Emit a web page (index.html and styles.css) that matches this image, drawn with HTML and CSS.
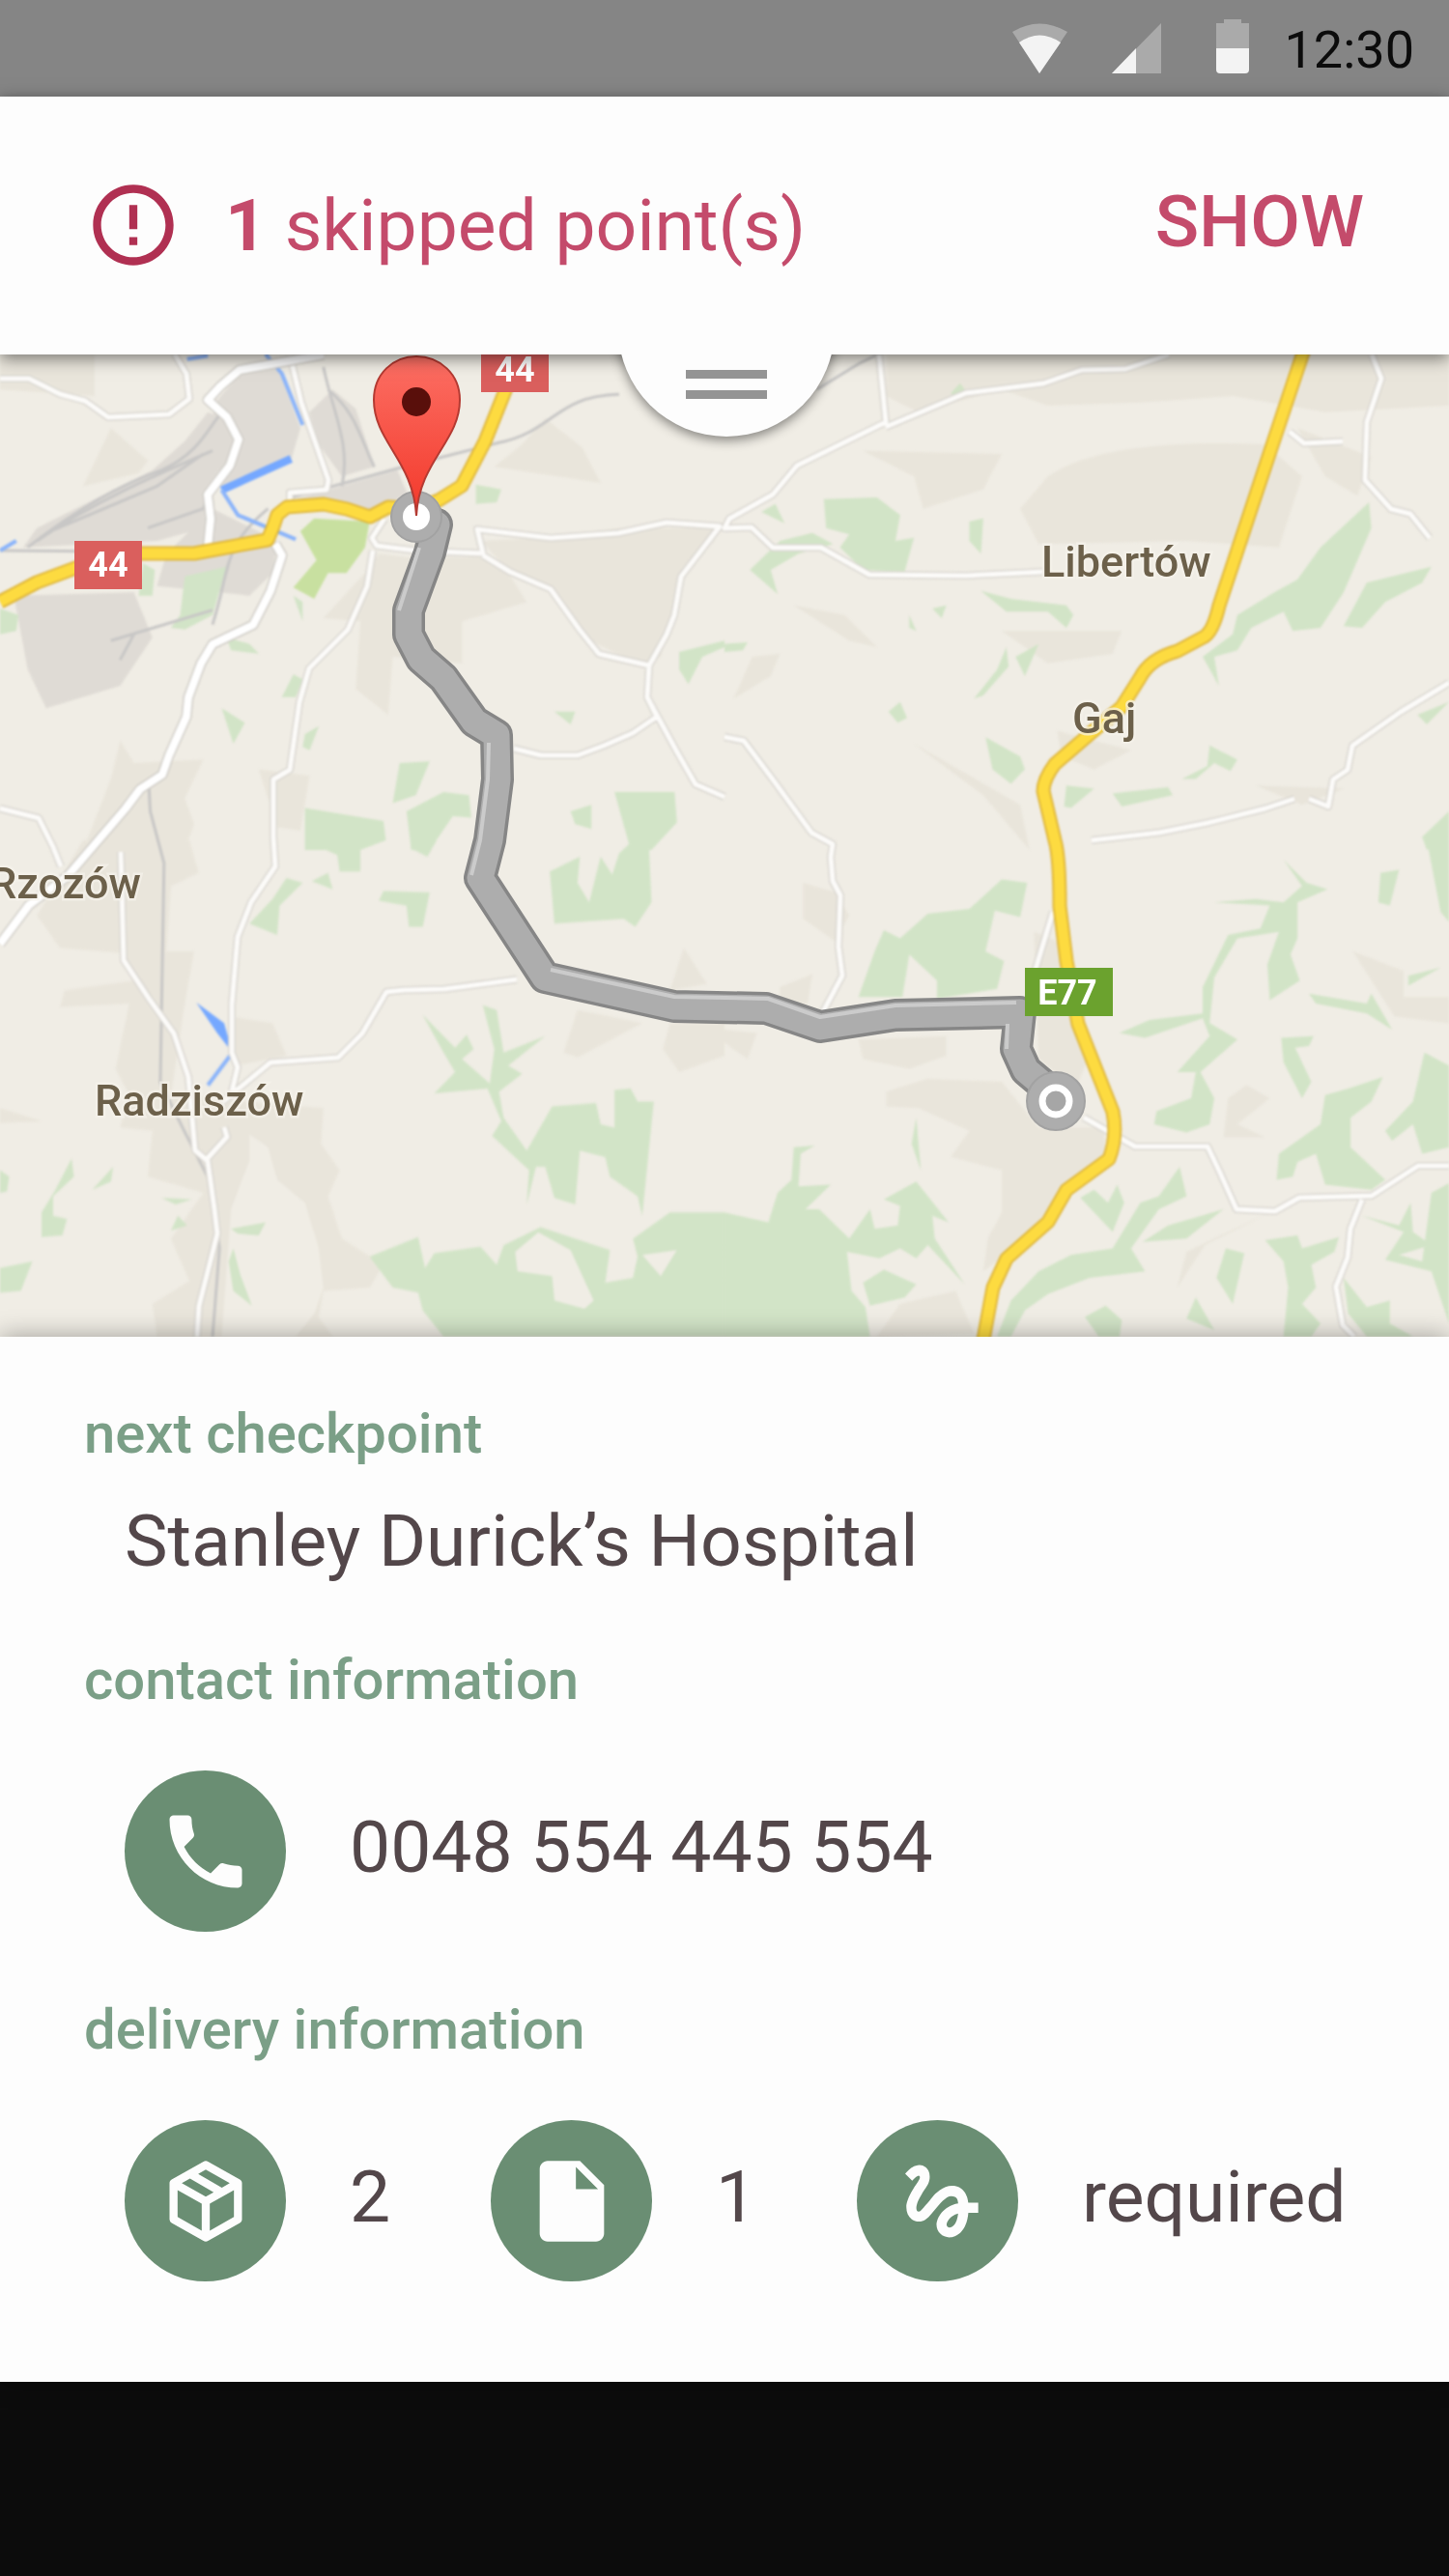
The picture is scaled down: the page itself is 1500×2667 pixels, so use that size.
FILE: index.html
```html
<!DOCTYPE html>
<html lang="en">
<head>
<meta charset="utf-8">
<meta name="viewport" content="width=device-width, initial-scale=1">
<title>Next checkpoint</title>
<link rel="stylesheet" href="styles.css">
</head>
<body>
<div class="screen">
  <div class="status-bar">
    <svg class="status-icons" viewBox="0 0 246 56" aria-hidden="true">
      <path class="dim" d="M28 56L0 13Q28-4 57 13Z"/>
      <path class="lit" d="M28 56L7 24Q28 9 50 24Z"/>
      <path class="dim" d="M103 56L154 4V56Z"/>
      <path class="lit" d="M103 56L128 30V56Z"/>
      <path class="dim" d="M211 30V4H219V0H237V4H245V30Z"/>
      <path class="lit" d="M211 30H245V52Q245 56 241 56H215Q211 56 211 52Z"/>
    </svg>
    <time class="clock">12:30</time>
  </div>

  <header class="alert">
    <svg class="alert-icon" viewBox="0 0 24 24" aria-hidden="true"><path d="M11 15h2v2h-2zm0-8h2v6h-2zm.99-5C6.47 2 2 6.48 2 12s4.47 10 9.99 10C17.52 22 22 17.52 22 12S17.52 2 11.99 2zM12 20c-4.42 0-8-3.58-8-8s3.58-8 8-8 8 3.58 8 8-3.58 8-8 8z"/></svg>
    <p class="alert-text"><strong>1</strong> skipped point(s)</p>
    <button class="alert-action" type="button">SHOW</button>
    <div class="handle-clip">
      <button class="handle" type="button" aria-label="Expand"><span class="handle-bar"></span><span class="handle-bar"></span></button>
    </div>
  </header>

  <main>
  <svg class="map" viewBox="0 0 1500 1017" role="img" aria-label="Route map">
    <g class="land">
      <!-- north-west -->
      <g transform="translate(0 -7) scale(.4783 .3333)">
        <path class="field" d="M0 20H205V150L0 130ZM240 250L320 350 300 390 180 430ZM1180 220L1260 310 1300 420 1070 370 1130 300ZM1040 600L1180 590 1340 560 1550 560 1480 680 1430 960 1390 985 1260 900 1200 760 1100 690ZM820 640L880 650 1040 650 1100 700 1140 790 1000 850 1000 980 850 960 840 1140 770 1060 780 850 700 840 790 700ZM560 1310L670 1330 650 1500 600 1490ZM260 1220L290 1290 440 1280 400 1400 420 1480 400 1560H180L240 1340Z"/>
        <path class="urban" d="M520 80L600 50 650 250 630 350 480 440 460 180ZM720 130L770 190 810 370 740 400 690 300 670 200ZM450 200L500 230 520 290 450 430 440 560 340 600 50 620 80 560 330 380 400 290ZM460 500L600 600 590 700 540 770 340 740 360 640ZM30 770L290 760 330 900 260 1050 100 1120 60 1000ZM640 470L860 380 890 480 800 510Z"/>
        <path class="wood" d="M310 670L335 690 330 770 300 770ZM400 710L490 680 460 830 400 875 370 870 390 830ZM0 810L40 830 35 880 0 890ZM490 900L540 920 560 950 500 940ZM1030 425L1085 440 1075 480 1030 485ZM1470 945L1568 910V930L1520 960 1490 1045 1470 1000ZM635 1015L655 1030 640 1085 610 1085ZM480 1120L530 1165 505 1230ZM690 1175L670 1250 655 1240 660 1200ZM1200 1130L1245 1130 1235 1170ZM865 1290L930 1285 900 1390 850 1415ZM660 1430L830 1470 835 1530 780 1560H660ZM880 1440L960 1380 1015 1390 1020 1460 980 1455 930 1560H890ZM1235 1440L1280 1420 1280 1495 1245 1480ZM1330 1380H1460L1465 1475 1410 1560H1365ZM635 770L655 790 655 850Z"/>
        <path class="park" d="M680 530L800 540 790 620 750 700 710 700 680 780 635 745 685 660 650 570Z"/>
        <path class="rail" d="M60 620C150 520 250 430 350 380C430 330 450 250 480 200M80 600C200 480 330 400 460 320M110 570L340 430 440 330M320 560L440 500 460 430M0 630L200 632M620 470L860 375 1080 295C1200 260 1200 150 1340 145M700 60C720 200 760 300 740 430M710 130C770 200 780 280 810 370M240 910L460 815M580 500C480 620 500 680 460 860M260 970L290 890"/>
        <path class="river" d="M630 345L480 442"/>
        <path class="stream" d="M575 20L610 80 655 240M480 442L515 520 640 595M0 630L35 600M405 35L450 25"/>
      </g>
      <!-- north-east -->
      <g transform="translate(750 -7) scale(.4783 .3333)">
        <path class="field" d="M350 20H1568V180L1300 200 1100 150 900 170 700 180 600 130 420 200 350 150ZM300 320L600 330 560 440 430 500 410 400ZM700 400C800 300 1000 290 1170 300L1250 400 1200 620 1000 600 680 610 640 500ZM1240 250L1400 340 1370 460 1300 400ZM150 800L260 830 330 930 270 910ZM600 880L860 880 840 950 700 980ZM410 1230L640 1420 660 1560 560 1390ZM60 960L120 950 100 1020 20 1090ZM720 1190L880 1250 800 1310 730 1270ZM1150 1360L1340 1370 1250 1420Z"/>
        <path class="wood" d="M215 470L330 465 380 520 370 600 410 590 390 695 300 690 250 620 270 580 220 560ZM80 510L110 485 130 545ZM120 600L190 575 235 610 160 640 100 690 115 765 55 690ZM530 540L560 530 555 640 530 600ZM555 755L620 780 740 800 755 830 740 870 700 820 610 820ZM0 920L50 915 40 940 0 945ZM450 810L480 800 470 840ZM400 830L415 880 400 870ZM610 930L615 990 560 1080 540 1090 590 1000ZM355 1130L380 1100 395 1150 375 1165ZM565 1210L640 1270 650 1310 620 1355 580 1310ZM1395 480L1400 560 1340 760 1290 870 1230 880 1210 820 1140 870 1110 940 1060 960 1070 1050 1035 960 1100 890 1110 830 1190 760 1240 720 1290 620ZM1530 680L1510 730 1430 790 1380 870 1340 865 1390 730ZM990 1340L1045 1300 1050 1235 1110 1280 1095 1315 1060 1290 1020 1340ZM840 1385L960 1365 970 1390 860 1425ZM740 1360L800 1370 750 1430 735 1425ZM510 110L525 140 500 165 490 140ZM1568 1440V1530L1520 1560 1510 1520ZM1500 1140L1568 1100 1520 1170ZM630 960L680 920 650 1020Z"/>
        <path class="rail" d="M200 130L290 50 340 15"/>
      </g>
      <!-- south-west -->
      <g transform="translate(0 503) scale(.4783 .338)">
        <path class="field" d="M180 0H410L430 100 370 140 360 340H420L400 500 370 780 700 820 695 930 735 1010 710 1090 740 1220 830 1300 800 1370 700 1380 690 1460 720 1520H340L330 1420 410 1350 370 1220 440 1080 320 1030 330 890 260 880 280 780 250 700 280 500 130 510 140 460 290 430 270 345 130 330 80 230ZM500 540L590 560 620 660 510 690ZM1480 330L1530 440 1450 460ZM1250 520L1390 560 1250 665 1220 650ZM1450 560H1568V660L1470 710 1435 640ZM0 820L90 860 0 865Z"/>
        <path class="land-fill" d="M540 900L580 940 600 1040 660 1110 690 1250 700 1370 680 1450 640 1520H480L500 1130 540 980Z"/>
        <path class="wood" d="M660 0H780L780 95 735 95 730 45ZM890 0H945L925 50 890 25ZM620 115L655 130 605 200 600 290 540 255 590 180ZM675 125L710 100 720 150ZM830 155L930 160 915 265H885L880 200 820 185ZM1190 95L1255 50 1250 130 1275 190 1300 50 1325 105 1340 40 1370 0H1420L1405 30 1410 190 1375 265 1350 240 1200 255ZM915 535L985 635 1010 595 1025 640 1000 670 1060 745 1070 640 1045 505 1075 520 1090 650 1180 600 1100 690 1130 715 1080 770 1090 850 1140 950 1195 815 1290 805 1300 870 1330 880 1330 765 1365 760 1380 800 1415 800 1390 1150 1380 1090 1320 1030 1310 970 1255 950 1245 1115 1200 1095 1180 1000 1160 1000 1140 1115 1145 1010 1065 905 1085 860 1055 760 940 775 985 710 960 650ZM1568 1140H1450L1370 1220 1380 1275 1370 1340 1310 1355 1320 1255 1170 1185 1090 1240 1075 1300 1040 1245 940 1265 920 1310 905 1215 800 1275 850 1370 905 1385 915 1440 960 1520H1568Z"/>
        <path class="land-fill" d="M1165 1200L1235 1255 1285 1410 1265 1435 1200 1410 1195 1335 1120 1320 1115 1260ZM1390 1270L1465 1255 1430 1335Z"/>
        <path class="wood" d="M155 975L160 1030 115 1090 115 1150 145 1160 135 1210 90 1215 90 1140 120 1070ZM245 1000L240 1045 200 1070ZM350 1095L415 1100 380 1115ZM385 1150L405 1180 370 1195ZM500 1190L575 1170 560 1210 515 1205ZM505 1250L520 1330 545 1425 505 1380 495 1290ZM0 1310L70 1290 45 1380 0 1385ZM0 1010L20 1030 15 1075 0 1080Z"/>
        <path class="rail" d="M322 -180L325 -90 355 70 347 740 395 880 460 1060 475 1250 460 1520"/>
        <path class="water" d="M425 497L485 560 503 650 470 590Z"/>
        <path class="stream" d="M503 650L450 750"/>
      </g>
      <!-- south-east -->
      <g transform="translate(750 503) scale(.4783 .338)">
        <path class="field" d="M170 130L240 160 270 230 240 310 170 240ZM120 450L190 410 180 500 120 500ZM290 610L480 600 480 660 400 700 300 670ZM350 770L440 730 600 740 680 880 820 880 830 1000 740 1060 640 1240 560 1320 570 1220 600 1140 600 1010 490 970 530 890 420 820 350 815ZM1360 340L1470 400 1470 480 1568 480V560L1450 540ZM1130 750L1180 790 1110 870 1170 910 1080 910 1090 790ZM0 580L70 590 50 670 0 620ZM670 280L740 320 790 660 760 760 680 670ZM380 1420L500 1380 540 1510 330 1520ZM980 1370L1000 1260 1180 1140 1040 1240Z"/>
        <path class="wood" d="M290 480L325 340 345 275 380 300 440 225 530 210 600 120 655 130 640 235 585 215 565 340 605 370 590 455 460 485 460 430 400 350 385 480ZM1210 60L1260 130 1305 150 1240 190 1240 300 1225 350 1245 430 1180 490 1175 380 1200 280 1110 300 1060 420 1050 560 1110 610 1030 710 1060 790 1050 870 1000 895 930 870 935 830 1010 790 1020 710 980 710 1050 600 1035 545 910 605 855 590 920 550 1035 530 1035 450 1090 290 1160 270 1180 200 1060 190 1150 180 1210 190 1250 140ZM1420 100L1460 90 1440 200 1415 190ZM1520 0H1568V250L1550 220ZM1550 390L1480 445 1480 415ZM1265 470L1390 500 1400 470 1445 580 1390 530 1280 500ZM1205 605L1275 600 1265 630 1235 635 1270 740 1250 790 1210 680ZM1425 725L1400 800 1355 850 1355 940 1430 1040 1400 1070 1300 1055 1280 960 1240 985 1230 1030 1195 1040 1200 960 1290 870 1300 780 1350 760ZM1515 650L1568 690V940L1510 960 1490 870 1445 920 1430 890 1490 800ZM0 1140L95 1170 115 1080 145 1040 150 940 195 935 165 960 160 1060 230 1055 175 1130 205 1130 270 1220 315 1130 325 1190 375 1180 380 1120 345 1100 415 1045 485 1170 450 1150 455 1220 520 1360 440 1240 415 1280 380 1250 335 1280 265 1260 275 1380 305 1430 315 1520H0ZM300 1355L345 1315 415 1360 390 1400 315 1425ZM415 850L425 1010 405 930ZM770 1095L800 1070 830 1110 850 1055 865 1110 840 1200ZM985 1000L1000 1090 940 1130 880 1250 910 1320 790 1340 700 1390 650 1440 620 1520H590L620 1410 680 1320 750 1270 840 1250 900 1110 940 1090ZM1080 1130L1000 1220 905 1230 960 1180ZM1170 1225L1240 1210 1250 1250 1330 1215 1320 1260 1270 1300 1280 1370 1250 1420 1290 1480 1270 1520H1210L1220 1370 1210 1290ZM1085 1250L1125 1265 1100 1420 1065 1340ZM1020 1400L1060 1500 1000 1465ZM780 1460L825 1425 860 1470 855 1520H810ZM1340 1340L1390 1430 1440 1410 1440 1480 1490 1520H1390L1350 1450ZM1380 1150L1460 1180 1485 1110 1490 1200 1530 1240 1460 1270 1510 1290 1530 1080 1568 1050V1480L1530 1320 1430 1285 1470 1200Z"/>
      </g>

      <g class="minor-casing">
        <path id="lanes" d="M0 25L30 25 62 41 88 48 112 65 175 62 196 46 193 20 181 0M300 0L312 50 340 130 338 140 300 143 300 155M398 170L385 190 390 198 430 203 500 206 494 181 570 190 640 185 690 174 745 178 705 230 698 270 690 290 672 322 670 355 700 410 720 445 750 458M500 208L528 225 570 243 600 285 620 310 672 322M670 355L680 375 655 392 625 405 598 415 560 415 532 408M386 203L380 240 360 285 320 325 310 360 300 430 283 440 283 500 285 530 260 567 246 603 240 673 240 723 246 738 240 763M0 470L40 480 55 510 63 530M125 515L128 627 155 668 180 703 195 748 202 824 215 835 222 885 225 910 206 985 204 1017M230 774L280 733 350 728 375 703 400 660 418 658 460 657 535 647M232 800L235 810 215 832M910 0L917 70 825 115 800 145 755 170 750 180 778 179 800 200 850 200 900 228 1000 229 1080 225M917 75L1000 40 1080 30 1120 16 1165 15 1210 0M1420 0L1430 25 1415 70 1413 130 1440 160 1460 165 1480 190M1335 80L1350 92 1390 90M750 396L770 400 800 440 840 495 862 507 860 520 862 545 870 560 868 613 872 643 848 688M1130 503L1200 495 1250 485 1310 470 1340 460M1355 460L1375 468 1380 440 1395 430 1400 405 1450 370 1500 340M1122 790L1175 820 1250 820 1262 845 1280 885 1320 887 1345 873 1420 871 1468 840 1500 840M1410 875L1398 905 1395 935 1383 965 1390 1005 1402 1017M1090 577L1070 643"/>
      </g>
      <use href="#lanes" class="minor"/>
      <g class="major-casing">
        <path id="streets" d="M335 0L248 16 228 33 215 47 235 65 247 88 238 115 215 145 218 170 215 200M285 196L292 208 280 245 262 280 220 300 208 320 195 355 193 375 175 415 168 435 145 450 130 470 100 505 70 540 30 570 0 610"/>
      </g>
      <use href="#streets" class="major"/>
      <path id="highways" class="highway-casing" d="M0 256L38 236 81 220 143 206 201 206 277 192 283 178 287 166 297 158 335 155 359 160 383 168 402 158 431 160 454 151 478 136 502 90 530 20M1350-5L1314 103 1262 260Q1256 286 1247 292L1219 307Q1190 315 1180 335L1161 365 1128 393 1092 424Q1080 440 1080 452L1092 503Q1097 520 1097 571L1104 628 1116 693 1133 736 1152 784Q1157 810 1148 833L1104 865 1085 898 1042 936 1028 966 1018 1020"/>
      <path class="highway" d="M0 256L38 236 81 220 143 206 201 206 277 192 283 178 287 166 297 158 335 155 359 160 383 168 402 158 431 160 454 151 478 136 502 90 530 20M1350-5L1314 103 1262 260Q1256 286 1247 292L1219 307Q1190 315 1180 335L1161 365 1128 393 1092 424Q1080 440 1080 452L1092 503Q1097 520 1097 571L1104 628 1116 693 1133 736 1152 784Q1157 810 1148 833L1104 865 1085 898 1042 936 1028 966 1018 1020"/>
    </g>

    <g class="route">
      <path class="route-edge" d="M431 168L452 176 445 205 423 265 423 290 436 315 459 335 491 380 514 394 515 440 507 503 497 542 564 645 698 675 793 677 849 696 927 684 1056 681 1052 719 1062 741 1093 767"/>
      <path class="route-core" d="M431 168L452 176 445 205 423 265 423 290 436 315 459 335 491 380 514 394 515 440 507 503 497 542 564 645 698 675 793 677 849 696 927 684 1056 681 1052 719 1062 741 1093 767"/>
      <path class="route-shine" d="M434 200L413 265M506 402L505 440 497 503 488 539M570 637L698 665 795 667 849 686 927 674 1052 671M1043 693L1042 719"/>
      <circle class="stop" cx="431" cy="168" r="26"/>
      <circle class="stop-dot" cx="431" cy="168" r="14"/>
      <circle class="stop" cx="1093" cy="773" r="30"/>
      <circle class="stop-ring" cx="1093" cy="773" r="14"/>
    </g>

    <defs>
      <linearGradient id="pin-fill" x1="0" y1="0" x2="0" y2="1"><stop offset="0" stop-color="#fc6f64"/><stop offset="1" stop-color="#f3382a"/></linearGradient>
    </defs>
    <path class="pin" d="M431 167C428 110 387 90 387 47C387 20 407 2 431 2S476 20 476 47C476 90 434 110 431 167Z"/>
    <circle class="pin-hole" cx="431" cy="49" r="15"/>

    <g class="shield">
      <rect class="red" x="77" y="193" width="70" height="50"/>
      <rect class="red" x="498" y="-11" width="70" height="50"/>
      <rect class="green" x="1061" y="635" width="91" height="50"/>
      <text x="112" y="230">44</text>
      <text x="533" y="28">44</text>
      <text x="1105" y="673">E77</text>
    </g>
    <g class="town">
      <text x="1078" y="230">Libertów</text>
      <text x="1110" y="392">Gaj</text>
      <text x="146" y="563" text-anchor="end">Rzozów</text>
      <text x="98" y="788">Radziszów</text>
    </g>
  </svg>

  <section class="sheet">
    <h2 class="label">next checkpoint</h2>
    <p class="place">Stanley Durick’s Hospital</p>

    <h2 class="label">contact information</h2>
    <div class="row">
      <div class="item">
        <button class="badge" type="button" aria-label="Call"><svg viewBox="0 0 24 24" aria-hidden="true"><path d="M6.62 10.79c1.44 2.83 3.76 5.14 6.59 6.59l2.2-2.2c.27-.27.67-.36 1.02-.24 1.12.37 2.33.57 3.57.57.55 0 1 .45 1 1V20c0 .55-.45 1-1 1-9.39 0-17-7.61-17-17 0-.55.45-1 1-1h3.5c.55 0 1 .45 1 1 0 1.25.2 2.45.57 3.57.11.35.03.74-.25 1.02l-2.2 2.2z"/></svg></button>
        <a class="value" href="tel:0048554445554">0048 554 445 554</a>
      </div>
    </div>

    <h2 class="label">delivery information</h2>
    <div class="row">
      <div class="item">
        <span class="badge"><svg viewBox="0 0 24 24" aria-hidden="true"><path d="M21 16.5c0 .38-.21.71-.53.88l-7.9 4.44c-.16.12-.36.18-.57.18-.21 0-.41-.06-.57-.18l-7.9-4.44A.991.991 0 0 1 3 16.5v-9c0-.38.21-.71.53-.88l7.9-4.44c.16-.12.36-.18.57-.18.21 0 .41.06.57.18l7.9 4.44c.32.17.53.5.53.88v9M12 4.15l-1.89 1.07L16 8.61l1.96-1.11L12 4.15M6.04 7.5L12 10.85l1.96-1.1-5.88-3.4L6.04 7.5M5 15.91l6 3.38v-6.71L5 9.21v6.7m14 0v-6.7l-6 3.37v6.71l6-3.38z"/></svg></span>
        <span class="value">2</span>
      </div>
      <div class="item">
        <span class="badge"><svg viewBox="0 0 24 24" aria-hidden="true"><path d="M6 2c-1.1 0-1.99.9-1.99 2L4 20c0 1.1.89 2 1.99 2H18c1.1 0 2-.9 2-2V8l-6-6H6zm7 7V3.5L18.5 9H13z"/></svg></span>
        <span class="value">1</span>
      </div>
      <div class="item">
        <span class="badge"><svg viewBox="-1 0 24 24" aria-hidden="true"><path d="M4.59 6.89c.7-.71 1.4-1.35 1.71-1.22.5.2 0 1.03-.3 1.52-.25.42-2.86 3.89-2.86 6.31 0 1.28.48 2.34 1.34 2.98.75.56 1.74.73 2.64.46 1.07-.31 1.95-1.4 3.06-2.77 1.21-1.49 2.83-3.44 4.08-3.44 1.63 0 1.65 1.01 1.76 1.79-3.78.64-5.38 3.67-5.38 5.37 0 1.7 1.44 3.09 3.21 3.09 1.63 0 4.29-1.33 4.69-6.1H21v-2.5h-2.47c-.15-1.65-1.09-4.2-4.03-4.2-2.25 0-4.18 1.91-4.94 2.84-.58.73-2.06 2.48-2.29 2.72-.25.3-.68.84-1.11.84-.45 0-.72-.83-.36-1.92.35-1.09 1.4-2.86 1.85-3.52.78-1.14 1.3-1.92 1.3-3.28C8.95 3.69 7.31 3 6.44 3 5.12 3 3.97 4 3.72 4.25c-.36.36-.66.66-.88.93l1.75 1.71zm9.29 11.66c-.31 0-.74-.26-.74-.72 0-.6.73-2.2 2.87-2.76-.3 2.69-1.43 3.48-2.13 3.48z"/></svg></span>
        <span class="value">required</span>
      </div>
    </div>
  </section>
  </main>
  <footer class="nav-bar"></footer>
</div>
</body>
</html>
```
FILE: styles.css
```css
* { box-sizing: border-box; }

body {
  margin: 0;
  background: #fdfdfd;
  color: #53474a;
  font-family: Roboto, "Liberation Sans", sans-serif;
}

h2, p { margin: 0; }

button {
  border: 0;
  padding: 0;
  background: none;
  font: inherit;
  color: inherit;
}

.screen {
  display: flex;
  flex-direction: column;
  min-height: 100vh;
  overflow: hidden;
}

/* status bar */
.status-bar {
  display: flex;
  align-items: center;
  justify-content: flex-end;
  gap: 36px;
  height: 100px;
  padding-right: 36px;
  background: #858585;
}
.status-icons { width: 246px; height: 56px; margin-bottom: 4px; }
.dim { fill: #aaa; }
.lit { fill: #f3f3f3; }
.clock {
  padding-top: 4px;
  color: #0c0c0c;
  font-size: 54px;
  line-height: 64px;
}

/* skipped points banner */
.alert {
  position: relative;
  z-index: 1;
  display: flex;
  align-items: center;
  gap: 45px;
  height: 267px;
  padding: 0 88px 2px;
  background: #fdfdfd;
  box-shadow: 0 4px 16px rgba(0, 0, 0, .5);
  color: #c44b6b;
  font-size: 75px;
  line-height: 88px;
}
.alert-icon { flex: none; width: 100px; height: 100px; fill: #b03052; }
.alert-text { flex: 1; }
.alert-text strong { font-weight: 700; }
.alert-action { padding-bottom: 8px; font-weight: 500; }

.handle-clip {
  position: absolute;
  top: 100%;
  left: 50%;
  width: 280px;
  height: 120px;
  margin-left: -138px;
  overflow: hidden;
}
.handle {
  display: flex;
  flex-direction: column;
  align-items: center;
  justify-content: flex-end;
  gap: 12px;
  width: 224px;
  height: 224px;
  margin: -139px auto 0;
  padding-bottom: 39px;
  border-radius: 50%;
  background: #fdfdfd;
  box-shadow: 0 4px 12px rgba(0, 0, 0, .45);
}
.handle-bar { width: 84px; height: 9px; background: #949494; }

/* map */
.map { display: block; width: 100%; height: auto; background: #f0ede5; }
.map path { vector-effect: non-scaling-stroke; }
.land { filter: blur(1px); }
.land-fill { fill: #f0ede5; }
.field { fill: #e9e5db; }
.urban { fill: #dfdbd5; }
.wood { fill: #d2e4c7; }
.park { fill: #c8e0a0; }
.water { fill: #75a8ff; }
.rail, .river, .stream, .minor, .major, .highway,
.minor-casing, .major-casing, .highway-casing {
  fill: none;
  stroke-linejoin: round;
}
.rail { stroke: #c8c7c6; stroke-width: 3px; }
.river { stroke: #75a8ff; stroke-width: 8px; }
.stream { stroke: #8bb4fa; stroke-width: 4px; }
.minor-casing { stroke: #d9d6d0; stroke-width: 8px; }
.minor { stroke: #fcfbf9; stroke-width: 5px; }
.major-casing { stroke: #cfccc6; stroke-width: 11px; }
.major { stroke: #fff; stroke-width: 8px; }
.highway-casing { stroke: #dfb73c; stroke-width: 15px; }
.highway { stroke: #fddb40; stroke-width: 11px; }
#lanes, #streets { stroke: inherit; stroke-width: inherit; }

.route { fill: none; stroke-linejoin: round; }
.route-edge { stroke: #868686; stroke-width: 34px; }
.route-core { stroke: #adadad; stroke-width: 27px; }
.route-shine { stroke: #cbcbcb; stroke-width: 4px; }
.stop { fill: #adadad; stroke: #a2a2a2; stroke-width: 2px; }
.stop-dot { fill: #fff; }
.stop-ring { fill: #a6a6a6; stroke: #fff; stroke-width: 7px; }
.pin { fill: url(#pin-fill); stroke: #b43a32; stroke-width: 2px; }
.pin-hole { fill: #590f0b; }

.shield { font-size: 36px; font-weight: 700; text-anchor: middle; }
.shield text { fill: #fff; }
.red { fill: #da5f5d; }
.green { fill: #6ba22e; }
.town text {
  fill: #6c604a;
  stroke: rgba(245, 242, 235, .7);
  stroke-width: 5px;
  paint-order: stroke;
  font-size: 45px;
  font-weight: 500;
}

/* checkpoint details */
.sheet {
  position: relative;
  padding: 66px 87px 104px;
  background: #fdfdfd;
  box-shadow: 0 0 24px rgba(0, 0, 0, .35);
}
.label {
  color: #7b9f87;
  font-size: 58px;
  font-weight: 500;
  line-height: 68px;
}
.place {
  margin: 33px 0 66px;
  padding-left: 42px;
  font-size: 75px;
  line-height: 88px;
}
.row {
  display: grid;
  grid-template-columns: 379px 379px 1fr;
  margin-top: 60px;
  padding-left: 42px;
}
.row + .label { margin-top: 67px; }
.item { display: flex; align-items: center; gap: 66px; white-space: nowrap; }
.badge {
  display: flex;
  flex: none;
  align-items: center;
  justify-content: center;
  width: 167px;
  height: 167px;
  border-radius: 50%;
  background: #6a8e73;
}
.badge svg { width: 100px; height: 100px; fill: #fdfdfd; }
.value {
  padding-bottom: 9px;
  color: inherit;
  font-size: 75px;
  line-height: 88px;
  text-decoration: none;
}

/* system navigation */
.nav-bar { flex: 1; min-height: 200px; background: #0c0c0c; }
```
